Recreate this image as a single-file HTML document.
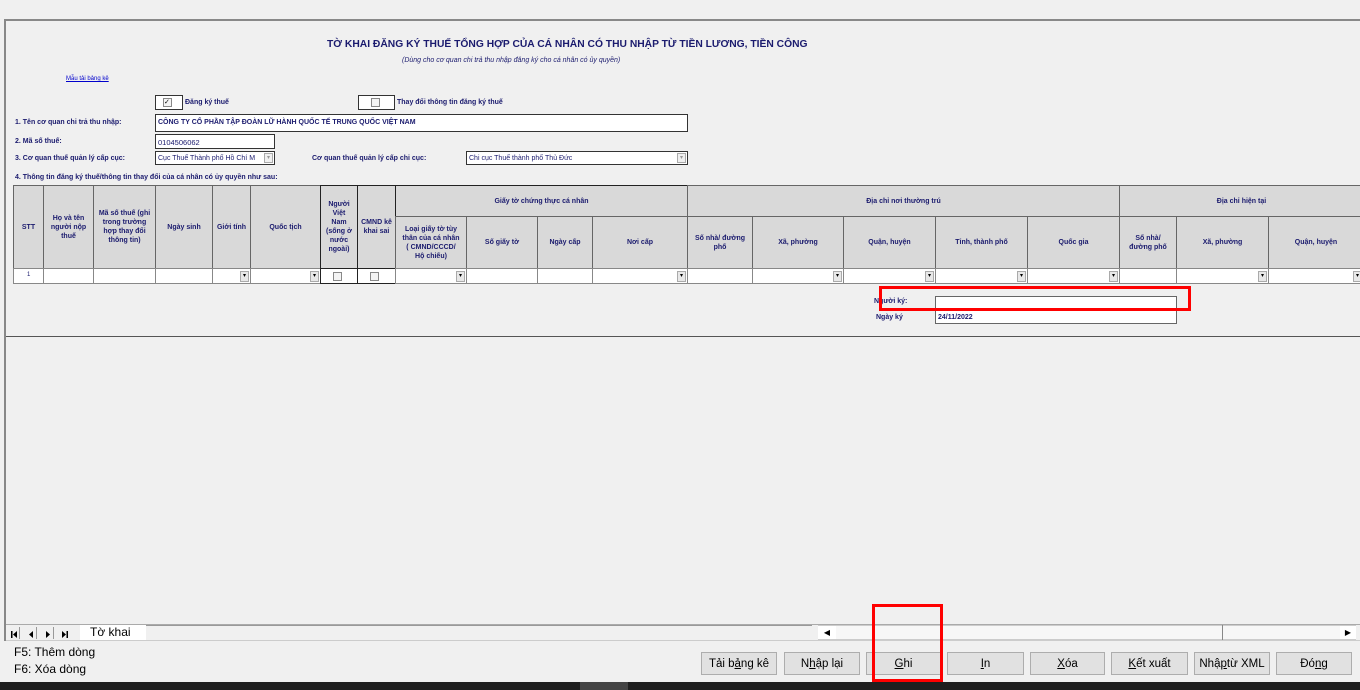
<!DOCTYPE html>
<html><head><meta charset="utf-8"><style>
*{margin:0;padding:0;box-sizing:border-box}
body{width:1360px;height:690px;background:#f0f0f0;position:relative;overflow:hidden;font-family:"Liberation Sans",sans-serif}
.a{position:absolute}
.t{font-size:7px;font-weight:bold;color:#1b1b6e;white-space:nowrap}
.box{position:absolute;background:#fff;border:1px solid #333}
.c{position:absolute;border:1px solid #666;background:#d9d9d9;display:flex;align-items:center;justify-content:center;text-align:center;font-size:7px;font-weight:bold;color:#1b1b6e;line-height:9px}
.d{position:absolute;border:1px solid #888;background:#fff;height:16px}
.dd{position:absolute;right:1px;top:2px;width:9px;height:11px;background:#e8e8e8;border:1px solid #aaa;font-size:6px;line-height:9px;text-align:center;color:#000}
.cb{position:absolute;width:9px;height:9px;border:1px solid #888;background:#f4f4f4}
.btn{position:absolute;top:652px;height:23px;border:1px solid #adadad;background:#e1e1e1;font-size:11.5px;color:#000;display:flex;align-items:center;justify-content:center}
.nv{position:absolute;top:627px;width:12px;height:12px;border-right:1px solid #999}
</style></head><body>
<div class="a" style="left:4px;top:19px;width:1356px;height:2px;background:#888"></div>
<div class="a" style="left:4px;top:19px;width:2px;height:622px;background:#888"></div>
<div class="a" style="left:6px;top:336px;width:1354px;height:1px;background:#555"></div>

<div class="a" style="left:327px;top:38px;font-size:10.5px;font-weight:bold;color:#1b1b6e;white-space:nowrap;transform:scaleX(0.98);transform-origin:left">TỜ KHAI ĐĂNG KÝ THUẾ TỔNG HỢP CỦA CÁ NHÂN CÓ THU NHẬP TỪ TIỀN LƯƠNG, TIỀN CÔNG</div>
<div class="a" style="left:402px;top:57px;font-size:7px;font-style:italic;color:#1b1b6e">(Dùng cho cơ quan chi trả thu nhập đăng ký cho cá nhân có ủy quyền)</div>
<div class="a" style="left:66px;top:76px;font-size:6px;color:#00c;text-decoration:underline">Mẫu tải bảng kê</div>

<div class="box" style="left:155px;top:95px;width:28px;height:15px"><div class="cb" style="left:7px;top:2px;font-size:7px;line-height:7px">✓</div></div>
<div class="a t" style="left:185px;top:99px">Đăng ký thuế</div>
<div class="box" style="left:358px;top:95px;width:37px;height:15px"><div class="cb" style="left:12px;top:2px"></div></div>
<div class="a t" style="left:397px;top:99px">Thay đổi thông tin đăng ký thuế</div>

<div class="a t" style="left:15px;top:119px">1. Tên cơ quan chi trả thu nhập:</div>
<div class="box" style="left:155px;top:114px;width:533px;height:18px"><span class="a t" style="left:2px;top:4px">CÔNG TY CỔ PHẦN TẬP ĐOÀN LỮ HÀNH QUỐC TẾ TRUNG QUỐC VIỆT NAM</span></div>
<div class="a t" style="left:15px;top:138px">2. Mã số thuế:</div>
<div class="box" style="left:155px;top:134px;width:120px;height:15px"><span class="a" style="left:2px;top:3px;font-size:7.5px;color:#1b1b6e">0104506062</span></div>
<div class="a t" style="left:15px;top:155px">3. Cơ quan thuế quản lý cấp cục:</div>
<div class="box" style="left:155px;top:151px;width:120px;height:14px"><span class="a t" style="left:2px;top:3px;font-weight:normal">Cục Thuế Thành phố Hồ Chí M</span><div class="dd" style="top:1px;height:10px;background:#f0f0f0;color:#999">▾</div></div>
<div class="a t" style="left:312px;top:155px">Cơ quan thuế quản lý cấp chi cục:</div>
<div class="box" style="left:466px;top:151px;width:222px;height:14px"><span class="a t" style="left:2px;top:3px;font-weight:normal">Chi cục Thuế thành phố Thủ Đức</span><div class="dd" style="top:1px;height:10px;background:#f0f0f0;color:#999">▾</div></div>
<div class="a t" style="left:15px;top:174px">4. Thông tin đăng ký thuế/thông tin thay đổi của cá nhân có ủy quyền như sau:</div>

<div class="c" style="left:13px;top:185px;width:31px;height:84px">STT</div>
<div class="c" style="left:43px;top:185px;width:51px;height:84px">Họ và tên<br>người nộp<br>thuế</div>
<div class="c" style="left:93px;top:185px;width:63px;height:84px">Mã số thuế (ghi<br>trong trường<br>hợp thay đổi<br>thông tin)</div>
<div class="c" style="left:155px;top:185px;width:58px;height:84px">Ngày sinh</div>
<div class="c" style="left:212px;top:185px;width:39px;height:84px">Giới tính</div>
<div class="c" style="left:250px;top:185px;width:71px;height:84px">Quốc tịch</div>
<div class="c" style="left:320px;top:185px;width:38px;height:84px;border-color:#222">Người<br>Việt<br>Nam<br>(sống ở<br>nước<br>ngoài)</div>
<div class="c" style="left:357px;top:185px;width:39px;height:84px;border-color:#222">CMND kê<br>khai sai</div>
<div class="c" style="left:395px;top:185px;width:293px;height:32px;border-color:#222">Giấy tờ chứng thực cá nhân</div>
<div class="c" style="left:687px;top:185px;width:433px;height:32px">Địa chỉ nơi thường trú</div>
<div class="c" style="left:1119px;top:185px;width:245px;height:32px">Địa chỉ hiện tại</div>
<div class="c" style="left:395px;top:216px;width:72px;height:53px">Loại giấy tờ tùy<br>thân của cá nhân<br>( CMND/CCCD/<br>Hộ chiếu)</div>
<div class="c" style="left:466px;top:216px;width:72px;height:53px">Số giấy tờ</div>
<div class="c" style="left:537px;top:216px;width:56px;height:53px">Ngày cấp</div>
<div class="c" style="left:592px;top:216px;width:96px;height:53px">Nơi cấp</div>
<div class="c" style="left:687px;top:216px;width:66px;height:53px">Số nhà/ đường<br>phố</div>
<div class="c" style="left:752px;top:216px;width:92px;height:53px">Xã, phường</div>
<div class="c" style="left:843px;top:216px;width:93px;height:53px">Quận, huyện</div>
<div class="c" style="left:935px;top:216px;width:93px;height:53px">Tỉnh, thành phố</div>
<div class="c" style="left:1027px;top:216px;width:93px;height:53px">Quốc gia</div>
<div class="c" style="left:1119px;top:216px;width:58px;height:53px">Số nhà/<br>đường phố</div>
<div class="c" style="left:1176px;top:216px;width:93px;height:53px">Xã, phường</div>
<div class="c" style="left:1268px;top:216px;width:96px;height:53px">Quận, huyện</div>

<div class="d" style="left:13px;top:268px;width:31px"><span class="a" style="left:13px;top:3px;font-size:6px;color:#1b1b6e">1</span></div>
<div class="d" style="left:43px;top:268px;width:51px"></div>
<div class="d" style="left:93px;top:268px;width:63px"></div>
<div class="d" style="left:155px;top:268px;width:58px"></div>
<div class="d" style="left:212px;top:268px;width:39px"><div class="dd">▾</div></div>
<div class="d" style="left:250px;top:268px;width:71px"><div class="dd">▾</div></div>
<div class="d" style="left:320px;top:268px;width:38px;border-color:#222"><div class="cb" style="left:12px;top:3px"></div></div>
<div class="d" style="left:357px;top:268px;width:39px;border-color:#222"><div class="cb" style="left:12px;top:3px"></div></div>
<div class="d" style="left:395px;top:268px;width:72px"><div class="dd">▾</div></div>
<div class="d" style="left:466px;top:268px;width:72px"></div>
<div class="d" style="left:537px;top:268px;width:56px"></div>
<div class="d" style="left:592px;top:268px;width:96px"><div class="dd">▾</div></div>
<div class="d" style="left:687px;top:268px;width:66px"></div>
<div class="d" style="left:752px;top:268px;width:92px"><div class="dd">▾</div></div>
<div class="d" style="left:843px;top:268px;width:93px"><div class="dd">▾</div></div>
<div class="d" style="left:935px;top:268px;width:93px"><div class="dd">▾</div></div>
<div class="d" style="left:1027px;top:268px;width:93px"><div class="dd">▾</div></div>
<div class="d" style="left:1119px;top:268px;width:58px"></div>
<div class="d" style="left:1176px;top:268px;width:93px"><div class="dd">▾</div></div>
<div class="d" style="left:1268px;top:268px;width:96px"><div class="dd">▾</div></div>

<div class="a t" style="left:874px;top:298px">Người ký:</div>
<div class="box" style="left:935px;top:296px;width:242px;height:14px;border-color:#666"></div>
<div class="a t" style="left:876px;top:314px">Ngày ký</div>
<div class="box" style="left:935px;top:310px;width:242px;height:14px;border-color:#666"><span class="a t" style="left:2px;top:3px">24/11/2022</span></div>
<div class="a" style="left:879px;top:286px;width:312px;height:25px;border:3px solid #f00"></div>

<div class="a" style="left:6px;top:624px;width:1354px;height:1px;background:#aaa"></div>
<div class="nv" style="left:8px"><svg width="12" height="12"><rect x="3" y="3" width="1.5" height="7" fill="#000"/><path d="M9 3 L5 6.5 L9 10Z" fill="#000"/></svg></div>
<div class="nv" style="left:25px"><svg width="12" height="12"><path d="M8 3 L4 6.5 L8 10Z" fill="#000"/></svg></div>
<div class="nv" style="left:42px"><svg width="12" height="12"><path d="M4 3 L8 6.5 L4 10Z" fill="#000"/></svg></div>
<div class="nv" style="left:59px;border-right:none"><svg width="12" height="12"><path d="M3 3 L7 6.5 L3 10Z" fill="#000"/><rect x="7.5" y="3" width="1.5" height="7" fill="#000"/></svg></div>
<div class="a" style="left:80px;top:625px;width:66px;height:15px;background:#fff;font-size:12px;padding-left:10px;line-height:15px">Tờ khai</div>
<div class="a" style="left:146px;top:625px;width:666px;height:14px;border-top:1px solid #999;background:#f0f0f0"></div>
<div class="a" style="left:818px;top:625px;width:538px;height:15px;background:#f7f7f7;border:1px solid #ccc"></div>
<div class="a" style="left:818px;top:626px;width:18px;height:13px;background:#fff;font-size:8px;text-align:center;line-height:13px">◀</div>
<div class="a" style="left:1222px;top:625px;width:1px;height:15px;background:#888"></div>
<div class="a" style="left:1340px;top:626px;width:16px;height:13px;background:#fff;font-size:8px;text-align:center;line-height:13px">▶</div>
<div class="a" style="left:6px;top:640px;width:1354px;height:1px;background:#ccc"></div>

<div class="a" style="left:14px;top:645px;font-size:12px;color:#000">F5: Thêm dòng</div>
<div class="a" style="left:14px;top:662px;font-size:12px;color:#000">F6: Xóa dòng</div>

<div class="btn" style="left:701px;width:76px">Tải b<u>ả</u>ng kê</div>
<div class="btn" style="left:784px;width:76px">N<u>h</u>ập lại</div>
<div class="btn" style="left:866px;width:75px"><u>G</u>hi</div>
<div class="btn" style="left:947px;width:77px"><u>I</u>n</div>
<div class="btn" style="left:1030px;width:75px"><u>X</u>óa</div>
<div class="btn" style="left:1111px;width:77px"><u>K</u>ết xuất</div>
<div class="btn" style="left:1194px;width:76px">Nhậ<u>p</u> từ XML</div>
<div class="btn" style="left:1276px;width:76px">Đó<u>n</u>g</div>
<div class="a" style="left:872px;top:604px;width:71px;height:78px;border:3px solid #f00"></div>

<div class="a" style="left:0;top:682px;width:1360px;height:8px;background:#1f1f1f"></div>
<div class="a" style="left:580px;top:682px;width:48px;height:8px;background:#444"></div>
</body></html>
